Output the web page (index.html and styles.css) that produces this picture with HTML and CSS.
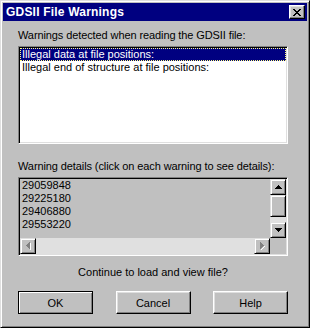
FILE: index.html
```html
<!DOCTYPE html>
<html>
<head>
  <title>GDSII File Warnings</title>
  <link rel="stylesheet" href="styles.css">
</head>
<body>
  <div class="window">
    <div class="titlebar">
      <span class="title">GDSII File Warnings</span>
      <button type="button" class="close">
        <svg width="8" height="7" viewBox="0 0 8 7" shape-rendering="crispEdges">
          <path d="M0 0h2v1H0zM6 0h2v1H6zM1 1h2v1H1zM5 1h2v1H5zM2 2h4v1H2zM3 3h2v1H3zM2 4h4v1H2zM1 5h2v1H1zM5 5h2v1H5zM0 6h2v1H0zM6 6h2v1H6z" fill="#000"/>
        </svg>
      </button>
    </div>
    <div class="body">
      <div class="label">Warnings detected when reading the GDSII file:</div>
      <ul class="warnings">
        <li class="selected">Illegal data at file positions:</li>
        <li>Illegal end of structure at file positions:</li>
      </ul>
      <div class="label gap">Warning details (click on each warning to see details):</div>
      <div class="details">
        <div class="details-text">
          <div>29059848</div>
          <div>29225180</div>
          <div>29406880</div>
          <div>29553220</div>
        </div>
        <div class="vscroll">
          <div class="sbtn">
            <svg width="7" height="4" viewBox="0 0 7 4" shape-rendering="crispEdges"><path d="M3 0h1v1H3zM2 1h3v1H2zM1 2h5v1H1zM0 3h7v1H0z" fill="#000"/></svg>
          </div>
          <div class="sbtn thumb"></div>
          <div class="track"></div>
          <div class="sbtn">
            <svg width="7" height="4" viewBox="0 0 7 4" shape-rendering="crispEdges"><path d="M0 0h7v1H0zM1 1h5v1H1zM2 2h3v1H2zM3 3h1v1H3z" fill="#000"/></svg>
          </div>
        </div>
        <div class="hscroll">
          <div class="sbtn">
            <svg width="5" height="8" viewBox="0 0 5 8" shape-rendering="crispEdges"><path d="M1 4h1v1H1zM2 5h1v1H2zM3 6h1v1H3zM4 1h1v7H4z" fill="#fff"/><path d="M3 0h1v7H3zM2 1h1v5H2zM1 2h1v3H1zM0 3h1v1H0z" fill="#808080"/></svg>
          </div>
          <div class="track"></div>
          <div class="sbtn">
            <svg width="5" height="8" viewBox="0 0 5 8" shape-rendering="crispEdges"><path d="M1 7h1v1H1zM2 6h1v1H2zM3 5h1v1H3zM4 4h1v1H4z" fill="#fff"/><path d="M0 0h1v7H0zM1 1h1v5H1zM2 2h1v3H2zM3 3h1v1H3z" fill="#808080"/></svg>
          </div>
        </div>
        <div class="corner"></div>
      </div>
      <div class="question">Continue to load and view file?</div>
      <div class="buttons">
        <button type="button" class="btn default">OK</button>
        <button type="button" class="btn">Cancel</button>
        <button type="button" class="btn">Help</button>
      </div>
    </div>
  </div>
</body>
</html>
```

FILE: styles.css
```css
* {
  box-sizing: border-box;
}
body {
  margin: 0;
  font-family: "Liberation Sans", Arial, sans-serif;
  font-size: 11px;
  line-height: 13px;
  color: #000;
  background-color: #c0c0c0;
}
.window {
  width: 310px;
  height: 328px;
  padding: 2px;
  background-color: #c0c0c0;
  border: 1px solid;
  border-color: #dfdfdf #000 #000 #dfdfdf;
  box-shadow: inset 1px 1px #fff, inset -1px -1px #808080;
}
.titlebar {
  height: 18px;
  background-color: #000080;
  display: flex;
  align-items: center;
  justify-content: space-between;
  padding-left: 3px;
  padding-right: 2px;
}
.title {
  color: #fff;
  font-weight: bold;
  font-size: 12px;
  letter-spacing: 0.2px;
}
.close {
  width: 16px;
  height: 14px;
  padding: 0;
  margin: 0;
  display: flex;
  align-items: center;
  justify-content: center;
  background-color: #c0c0c0;
  border: 1px solid;
  border-color: #fff #000 #000 #fff;
  box-shadow: inset -1px -1px #808080, inset 1px 1px #dfdfdf;
}
.body {
  padding-left: 15px;
  width: 285px;
}
.label {
  margin-top: 8px;
  height: 13px;
  white-space: nowrap;
  letter-spacing: -0.1px;
}
.label.gap {
  margin-top: 16px;
}
.warnings {
  list-style: none;
  margin: 4px 0 0 0;
  padding: 1px;
  width: 270px;
  height: 98px;
  background-color: #fff;
  border: 1px solid;
  border-color: #808080 #fff #fff #808080;
  box-shadow: inset 1px 1px #000, inset -1px -1px #dfdfdf;
}
.warnings li {
  height: 13px;
  padding-left: 2px;
  white-space: nowrap;
}
.warnings li.selected {
  background-color: #000080;
  color: #fff;
  outline: 1px dotted #ffff80;
  outline-offset: -1px;
}
.details {
  margin-top: 4px;
  width: 270px;
  height: 79px;
  padding: 1px;
  border: 1px solid;
  border-color: #808080 #fff #fff #808080;
  box-shadow: inset 1px 1px #000, inset -1px -1px #dfdfdf;
  display: grid;
  grid-template-columns: 1fr 16px;
  grid-template-rows: 1fr 16px;
}
.details-text {
  padding-left: 2px;
  overflow: hidden;
}
.vscroll {
  display: flex;
  flex-direction: column;
}
.hscroll {
  display: flex;
}
.track {
  flex: 1;
  background-color: #e0e0e0;
}
.sbtn {
  width: 16px;
  height: 16px;
  display: flex;
  align-items: center;
  justify-content: center;
  background-color: #c0c0c0;
  border: 1px solid;
  border-color: #dfdfdf #000 #000 #dfdfdf;
  box-shadow: inset 1px 1px #fff, inset -1px -1px #808080;
}
.sbtn.thumb {
  height: 22px;
}
.corner {
  background-color: #c0c0c0;
}
.question {
  margin-top: 10px;
  width: 270px;
  text-align: center;
}
.buttons {
  margin-top: 12px;
  width: 270px;
  display: flex;
  justify-content: space-between;
}
.btn {
  width: 75px;
  height: 23px;
  padding: 0;
  font-family: "Liberation Sans", Arial, sans-serif;
  font-size: 11px;
  color: #000;
  background-color: #c0c0c0;
  border: 1px solid;
  border-color: #fff #000 #000 #fff;
  box-shadow: inset -1px -1px #808080, inset 1px 1px #dfdfdf;
}
.btn.default {
  border-color: #000;
  box-shadow: inset 1px 1px #fff, inset -1px -1px #808080;
}
```
